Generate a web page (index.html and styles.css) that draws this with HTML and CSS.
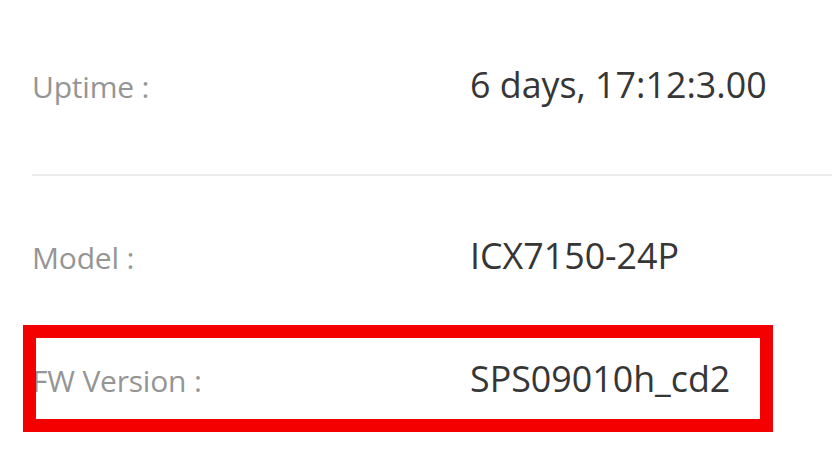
FILE: index.html
```
<!DOCTYPE html>
<html lang="en-US">
<head>
	<meta charset="UTF-8">
	<meta name="viewport" content="width=device-width, initial-scale=1.0">
	<title>Device Info</title>
	<link rel="stylesheet" href="styles.css">
</head>
<body>
	<div class="info">
		<div class="row row-first">
			<span class="label">Uptime :</span>
			<span class="value">6 days, 17:12:3.00</span>
		</div>

		<hr class="divider">

		<div class="row row-model">
			<span class="label">Model :</span>
			<span class="value">ICX7150-24P</span>
		</div>

		<div class="row row-fw">
			<span class="label">FW Version :</span>
			<span class="value">SPS09010h_cd2</span>
		</div>

		<!-- highlight box drawn over the FW row -->
		<div class="highlight"></div>
	</div>
</body>
</html>
```

FILE: styles.css
```
body{
	margin: 0;
	background-color: #fff;
	font-family: "Open Sans", "DejaVu Sans", sans-serif;
}

.info{
	position: relative;
	padding: 59px 0 0 32px;
	height: 451px;
	box-sizing: border-box;
}

.row{
	display: flex;
	align-items: baseline;
	line-height: 50px;
}

.label{
	width: 438px;
	flex-shrink: 0;
	font-size: 30px;
	color: #959595;
	letter-spacing: -0.2px;
}

.value{
	font-size: 35.8px;
	color: #363636;
}

.divider{
	border: none;
	height: 2px;
	background-color: #ececec;
	margin: 62px 0 0 0;
}

.row-model{
	margin-top: 54px;
}

.row-fw{
	margin-top: 70px;
}

.highlight{
	position: absolute;
	left: 23px;
	top: 325px;
	width: 750px;
	height: 107px;
	box-sizing: border-box;
	border: 13px solid #f50000;
}
```
